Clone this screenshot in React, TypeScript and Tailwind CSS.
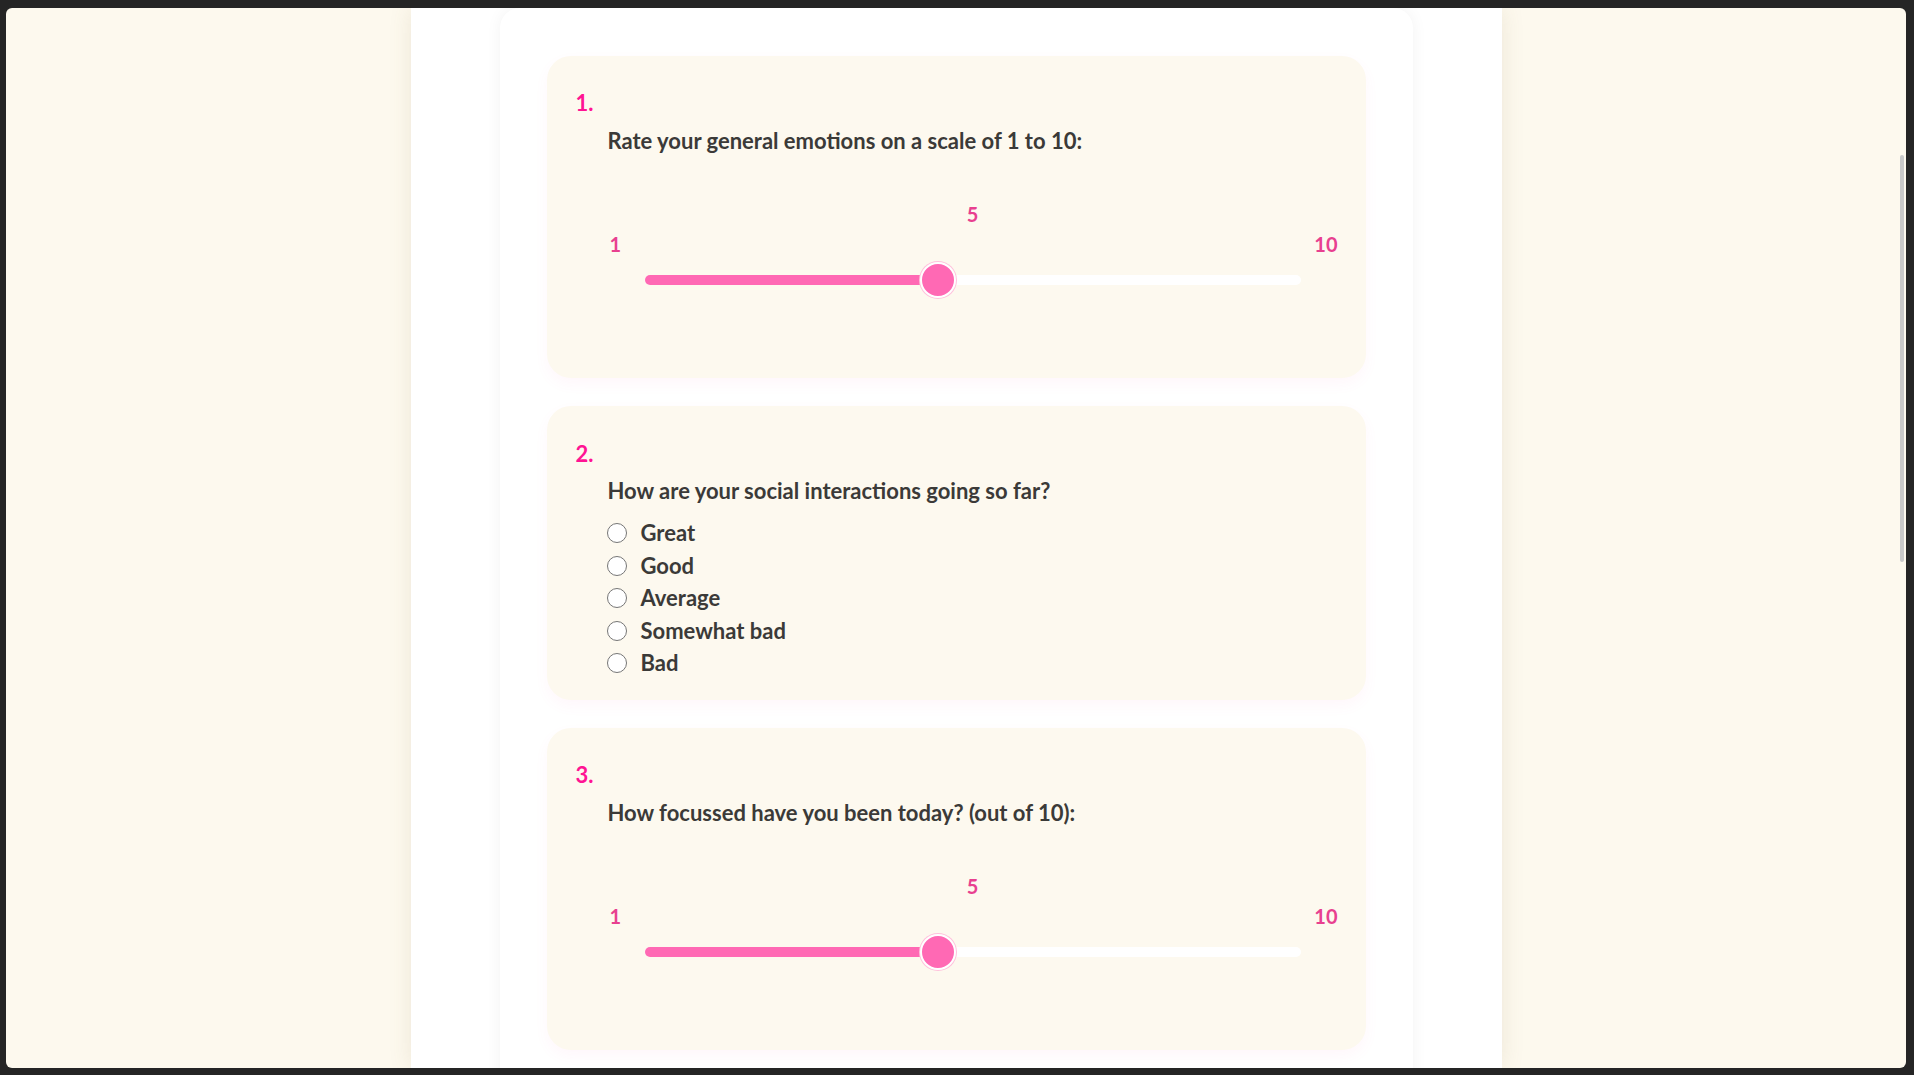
import React from 'react';

const TRACK_W = 656;
const THUMB_W = 36;

const RangeQuestion: React.FC<{ n: number; text: string; value: number }> = ({ n, text, value }) => {
  const ratio = (value - 1) / 9;
  const center = THUMB_W / 2 + ratio * (TRACK_W - THUMB_W);

  return (
    <div className="h-[322px] rounded-3xl bg-[#fdf9ef] pt-[33px] shadow-[0_6px_14px_rgba(255,105,180,0.05)]">
      <div className="pl-[29px] text-[22px] leading-[28px] font-bold text-[#ff1493]">{n}.</div>
      <div className="mt-[10px] pl-[61px] text-[22px] leading-[28px] font-bold text-[#3b3a38]">{text}</div>

      {/* slider */}
      <div className="mt-[45px] ml-[61px] mr-[28px]">
        <div className="text-center text-[20px] leading-[28px] font-bold text-[#e8408f]">5</div>
        <div className="mt-[2px] flex justify-between text-[20px] leading-[28px] font-bold text-[#e8408f]">
          <span className="pl-[2px]">1</span>
          <span>10</span>
        </div>
        <div className="mt-[17px] flex justify-center">
          <div className="relative h-[10px] w-[656px] rounded-full bg-white">
            <div className="absolute left-0 top-0 h-full rounded-full bg-[#ff69b4]" style={{ width: center }} />
            <div
              className="absolute top-1/2 h-[36px] w-[36px] -translate-x-1/2 -translate-y-1/2 rounded-full border-2 border-white bg-[#ff69b4] shadow-[0_0_0_1px_#ffc2dc]"
              style={{ left: center }}
            />
          </div>
        </div>
      </div>
    </div>
  );
};

const options = ['Great', 'Good', 'Average', 'Somewhat bad', 'Bad'];

const ChoiceQuestion: React.FC<{ n: number; text: string }> = ({ n, text }) => (
  <div className="h-[294px] rounded-3xl bg-[#fdf9ef] pt-[34px] shadow-[0_6px_14px_rgba(255,105,180,0.05)]">
    <div className="pl-[29px] text-[22px] leading-[28px] font-bold text-[#ff1493]">{n}.</div>
    <div className="mt-[9px] pl-[61px] text-[22px] leading-[28px] font-bold text-[#3b3a38]">{text}</div>
    <div className="mt-[12px] flex flex-col pl-[60px]">
      {options.map((o) => (
        <label key={o} className="flex h-[32.5px] items-center gap-[14px]">
          <span className="h-[20px] w-[20px] rounded-full border border-[#767676] bg-white" />
          <span className="text-[22px] leading-[28px] font-bold text-[#3b3a38]">{o}</span>
        </label>
      ))}
    </div>
  </div>
);

export default function App() {
  return (
    <div
      className="h-screen w-full overflow-hidden bg-[#252525] pt-[8px] pr-[8px] pb-[7px] pl-[6px]"
      style={{ fontFamily: 'Lato, "Noto Sans", sans-serif' }}
    >
      <div className="relative flex h-full justify-center overflow-hidden rounded-[6px] bg-[#fdf9ee]">
        <div className="w-[1091px] bg-white px-[89px] shadow-[0_0_22px_rgba(120,100,60,0.12)]">
          <div className="h-[1200px] rounded-t-[20px] bg-white px-[47px] pt-[48px] shadow-[0_0_16px_rgba(0,0,0,0.05)]">
            <div className="flex flex-col gap-[28px]">
              <RangeQuestion n={1} text="Rate your general emotions on a scale of 1 to 10:" value={5} />
              <ChoiceQuestion n={2} text="How are your social interactions going so far?" />
              <RangeQuestion n={3} text="How focussed have you been today? (out of 10):" value={5} />
            </div>
          </div>
        </div>

        {/* scrollbar */}
        <div className="absolute right-[2px] top-[147px] h-[407px] w-[4px] rounded-full bg-[#c9c9c9]" />
      </div>
    </div>
  );
}
